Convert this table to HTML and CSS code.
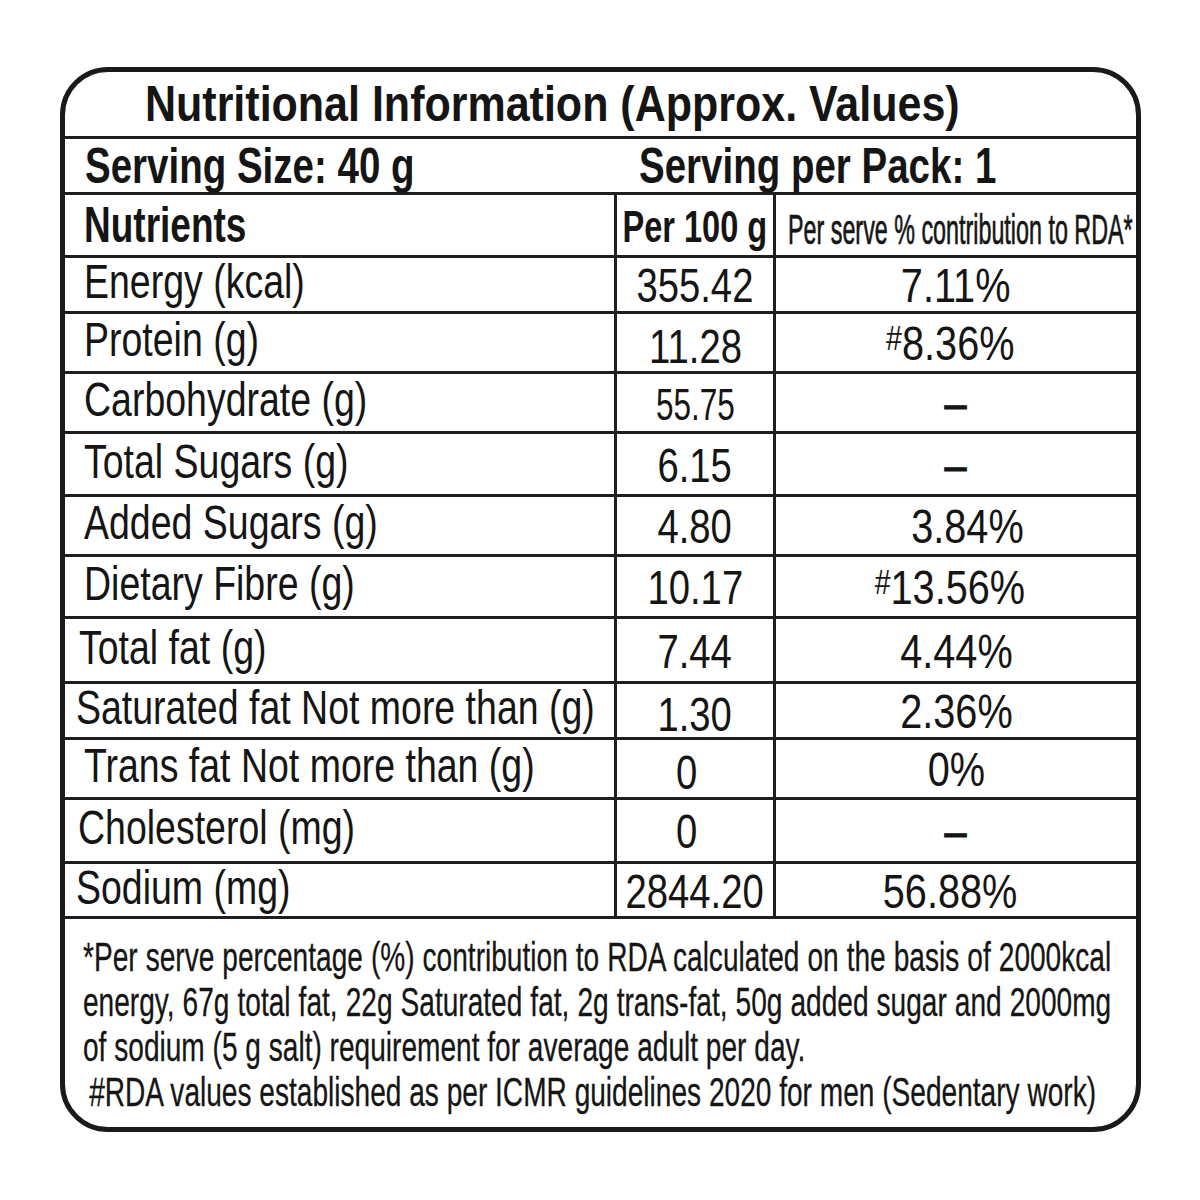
FILE: index.html
```html
<!DOCTYPE html>
<html lang="en">
<head>
<meta charset="utf-8">
<title>Nutritional Information</title>
<link rel="stylesheet" href="styles.css">
</head>
<body>
<div class="label">
  <div class="title"><span class="t">Nutritional Information (Approx. Values)</span></div>
  <div class="serving">
    <div class="serv"><span class="t">Serving Size: 40 g</span></div>
    <div class="serv"><span class="t">Serving per Pack: 1</span></div>
  </div>
  <div class="table">
    <div class="c name head"><span class="t">Nutrients</span></div>
    <div class="c mid head"><span class="t">Per 100 g</span></div>
    <div class="c rda head"><span class="t">Per serve % contribution to RDA*</span></div>

    <div class="c name"><span class="t">Energy (kcal)</span></div>
    <div class="c mid"><span class="t">355.42</span></div>
    <div class="c rda"><span class="t">7.11%</span></div>

    <div class="c name"><span class="t">Protein (g)</span></div>
    <div class="c mid low"><span class="t">11.28</span></div>
    <div class="c rda left"><span class="t"><span class="hash">#</span>8.36%</span></div>

    <div class="c name"><span class="t">Carbohydrate (g)</span></div>
    <div class="c mid small"><span class="t">55.75</span></div>
    <div class="c rda"><span class="t dash">–</span></div>

    <div class="c name"><span class="t">Total Sugars (g)</span></div>
    <div class="c mid"><span class="t">6.15</span></div>
    <div class="c rda"><span class="t dash">–</span></div>

    <div class="c name"><span class="t">Added Sugars (g)</span></div>
    <div class="c mid"><span class="t">4.80</span></div>
    <div class="c rda right"><span class="t">3.84%</span></div>

    <div class="c name"><span class="t">Dietary Fibre (g)</span></div>
    <div class="c mid"><span class="t">10.17</span></div>
    <div class="c rda left"><span class="t"><span class="hash">#</span>13.56%</span></div>

    <div class="c name tight-a"><span class="t">Total fat (g)</span></div>
    <div class="c mid"><span class="t">7.44</span></div>
    <div class="c rda"><span class="t">4.44%</span></div>

    <div class="c name tight"><span class="t">Saturated fat Not more than (g)</span></div>
    <div class="c mid low"><span class="t">1.30</span></div>
    <div class="c rda"><span class="t">2.36%</span></div>

    <div class="c name"><span class="t">Trans fat Not more than (g)</span></div>
    <div class="c mid low zero"><span class="t">0</span></div>
    <div class="c rda"><span class="t">0%</span></div>

    <div class="c name tight-b"><span class="t">Cholesterol (mg)</span></div>
    <div class="c mid zero"><span class="t">0</span></div>
    <div class="c rda"><span class="t dash">–</span></div>

    <div class="c name tight"><span class="t">Sodium (mg)</span></div>
    <div class="c mid"><span class="t">2844.20</span></div>
    <div class="c rda left"><span class="t">56.88%</span></div>
  </div>
  <div class="foot">
    <div class="foot-in">
      <div class="ln just">*Per serve percentage (%) contribution to RDA calculated on the basis of 2000kcal</div>
      <div class="ln just">energy, 67g total fat, 22g Saturated fat, 2g trans-fat, 50g added sugar and 2000mg</div>
      <div class="ln">of sodium (5 g salt) requirement for average adult per day.</div>
      <div class="ln ind">#RDA values established as per ICMR guidelines 2020 for men (Sedentary work)</div>
    </div>
  </div>
</div>
</body>
</html>
```
FILE: styles.css
```css
html, body {
  margin: 0;
  padding: 0;
  background: #ffffff;
}

body {
  font-family: "Liberation Sans", Arial, sans-serif;
  color: #151515;
}

.label {
  box-sizing: border-box;
  width: 1081px;
  height: 1065px;
  margin: 67px 0 0 60px;
  border: 5px solid #1a1a1a;
  border-radius: 48px;
  overflow: hidden;
  display: flex;
  flex-direction: column;
}

.t {
  display: inline-block;
  white-space: nowrap;
  line-height: 1;
  transform: translateY(var(--dy, 0px)) scaleX(var(--sx, 1));
  transform-origin: left center;
}

.title {
  box-sizing: border-box;
  height: 67px;
  border-bottom: 3px solid #1f1f1f;
  display: flex;
  align-items: center;
  padding-left: 80px;
  font-weight: 700;
  font-size: 50px;
  --sx: 0.86;
}

.serving {
  box-sizing: border-box;
  height: 56px;
  border-bottom: 3px solid #1f1f1f;
  display: grid;
  grid-template-columns: 554px minmax(0, 1fr);
  padding-left: 20px;
  align-items: center;
  font-weight: 700;
  font-size: 50px;
  --sx: 0.77;
  --dy: -2px;
}

.table {
  display: grid;
  grid-template-columns: 549px 162px 360px;
  grid-template-rows: 63px 56px 60px 60px 63px 60px 62px 65px 56px 60px 64px 55px;
}

.c {
  box-sizing: border-box;
  min-width: 0;
  border-bottom: 3px solid #1f1f1f;
  display: flex;
  align-items: center;
  font-size: 49px;
  overflow: visible;
}

.name {
  padding-left: 19px;
  --sx: 0.765;
  --dy: -3px;
}

.name.tight { padding-left: 11px; }
.name.tight-a { padding-left: 14px; }
.name.tight-b { padding-left: 13px; }

.mid {
  border-left: 3px solid #1f1f1f;
  border-right: 3px solid #1f1f1f;
  justify-content: center;
  --sx: 0.78;
  --dy: 1px;
}

.mid .t,
.rda .t {
  transform-origin: center center;
}

.mid.low { --dy: 4px; }
.mid.small { font-size: 45px; --sx: 0.70; --dy: 2px; }
.mid.zero { padding-right: 16px; }

.rda {
  justify-content: center;
  --sx: 0.81;
  --dy: 1px;
}

.rda.right { padding-left: 22px; }
.rda.left { padding-right: 12px; }

.hash {
  font-size: 0.72em;
  vertical-align: 0.28em;
}

.dash {
  -webkit-text-stroke: 1px #151515;
}

.head {
  font-weight: 700;
}

.name.head {
  font-size: 50px;
  --sx: 0.74;
  --dy: 0px;
}

.mid.head {
  font-size: 44px;
  --sx: 0.74;
  --dy: 2px;
}

.rda.head {
  justify-content: flex-start;
  padding-left: 12px;
  font-weight: 400;
  font-size: 42px;
  --sx: 0.555;
  --dy: 5px;
  -webkit-text-stroke: 0.7px #151515;
}

.rda.head .t {
  transform-origin: left center;
}

.foot {
  flex: 1;
  padding: 16px 0 0 18px;
  font-size: 41px;
  line-height: 45px;
  -webkit-text-stroke: 0.3px #151515;
}

.foot-in {
  width: 1501px;
  transform: scaleX(0.685);
  transform-origin: left top;
}

.ln {
  white-space: nowrap;
}

.ln.just {
  text-align: justify;
  text-align-last: justify;
  white-space: normal;
}

.ln.ind {
  padding-left: 9px;
}
```
